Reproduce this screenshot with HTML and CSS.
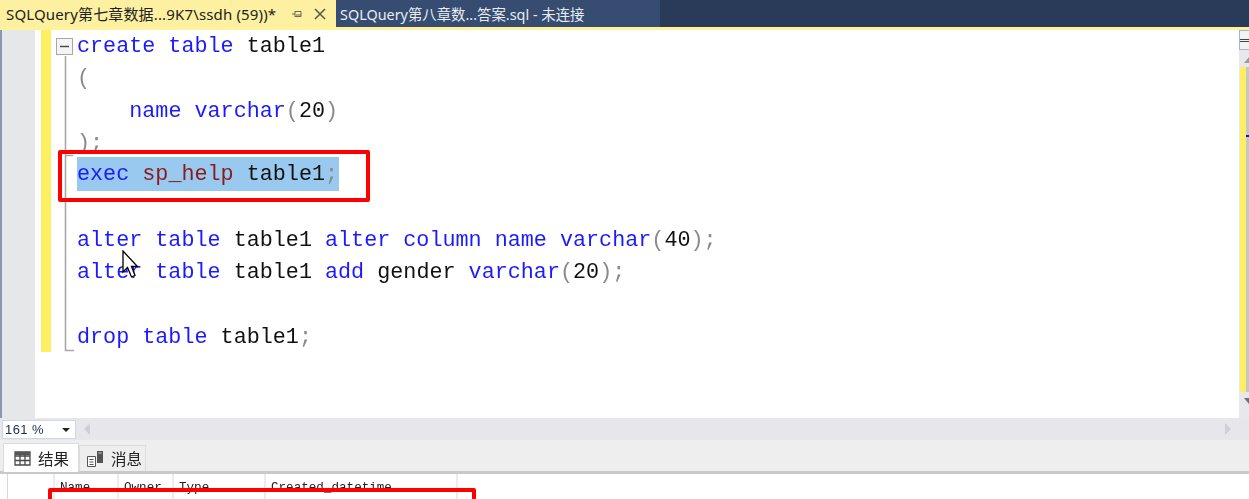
FILE: index.html
```html
<!DOCTYPE html>
<html lang="zh">
<head>
<meta charset="utf-8">
<title>SQLQuery</title>
<link rel="stylesheet" href="styles.css">
</head>
<body>
<div class="app">
  <div class="tabbar">
    <div class="tab tab-active">
      <span class="tab-title">SQLQuery第七章数据...9K7\ssdh (59))*</span>
      <svg class="tab-icon tab-pin" width="12" height="12" viewBox="0 0 12 12"><path d="M1 6h3M4 3v6M4 3.500h6v5H4M5 7h5" fill="none" stroke="#6b6a55" stroke-width="1"/></svg>
      <svg class="tab-icon" width="12" height="12" viewBox="0 0 12 12"><path d="M1 1l10 10M11 1L1 11" fill="none" stroke="#5b5a4a" stroke-width="1.600"/></svg>
    </div>
    <div class="tab tab-other">SQLQuery第八章数...答案.sql - 未连接</div>
  </div>
  <div class="accent"></div>
  <div class="editor">
    <div class="gutter"></div>
    <div class="margin"></div>
    <div class="changes"></div>
    <svg class="fold" width="26" height="322" viewBox="0 0 26 322">
      <path d="M14.500 26V320.500H23M14.500 125.500H22" fill="none" stroke="#a8a8a8" stroke-width="1.600"/>
      <rect x="5.500" y="8.500" width="16" height="16" fill="#f4f4f4" stroke="#a8a8a8"/>
      <path d="M9 16.500h9" stroke="#444" stroke-width="1.400"/>
    </svg>
    <div class="code">
      <div class="line"><b class="kw">create table</b> table1</div>
      <div class="line"><b class="op">(</b></div>
      <div class="line">    <b class="kw">name varchar</b><b class="op">(</b>20<b class="op">)</b></div>
      <div class="line"><b class="op">);</b></div>
      <div class="line"><span class="sel"><b class="kw">exec</b> <b class="sp">sp_help</b> table1<b class="op">;</b></span></div>
      <div class="line"> </div>
      <div class="line"><b class="kw">alter table</b> table1 <b class="kw">alter column name varchar</b><b class="op">(</b>40<b class="op">);</b></div>
      <div class="line"><b class="kw">alter table</b> table1 <b class="kw">add</b> gender <b class="kw">varchar</b><b class="op">(</b>20<b class="op">);</b></div>
      <div class="line"> </div>
      <div class="line"><b class="kw">drop table</b> table1<b class="op">;</b></div>
    </div>
    <div class="vscroll">
      <div class="split"><span class="split-bar"></span></div>
      <div class="arrow-up"></div>
      <div class="track"><div class="track-mark"></div><div class="track-gray"><i class="blue"></i></div></div>
      <div class="arrow-down"></div>
    </div>
  </div>
  <div class="hscroll">
    <div class="zoom-box"><span>161 %</span><i class="caret"></i></div>
    <i class="arrow-left"></i>
    <i class="arrow-right"></i>
  </div>
  <div class="result-tabs">
    <div class="rtab rtab-active">
      <svg width="17" height="15" viewBox="0 0 17 15"><path d="M1 1h15v13H1zM1 5h15M1 9.500h15M6 1v13M11 1v13" fill="none" stroke="#4a4a4a" stroke-width="1.300"/><path d="M1 1h15v3H1z" fill="#555"/></svg>
      <span>结果</span>
    </div>
    <div class="rtab rtab-plain">
      <svg width="18" height="18" viewBox="0 0 18 18"><path d="M1.500 6.500h8v10h-8zM3.500 9.500h4M3.500 12h4M3.500 14.500h4" fill="#fff" stroke="#555"/><path d="M11 1h6v12h-6z" fill="#555"/><path d="M12.500 3h3" stroke="#ddd"/></svg>
      <span>消息</span>
    </div>
  </div>
  <div class="grid">
    <div class="cell cell-blank"></div>
    <div class="cell cell-name">Name</div>
    <div class="cell cell-owner">Owner</div>
    <div class="cell cell-type">Type</div>
    <div class="cell cell-date">Created_datetime</div>
  </div>
  <div class="redbox redbox-code"></div>
  <div class="redbox redbox-grid"></div>
  <svg class="cursor" width="17" height="29" viewBox="0 0 17 29"><path d="M1 1V22L5.500 17.500L9.500 27L13 25.500L9.500 16.500H15.500Z" fill="#fff" stroke="#000" stroke-width="1.300"/></svg>
</div>
</body>
</html>
```
FILE: styles.css
```css
* { box-sizing: border-box; }
html, body { margin: 0; padding: 0; background: #fff; overflow: hidden; }
.app {
  position: relative;
  width: 1249px;
  height: 499px;
  overflow: hidden;
  display: flex;
  flex-direction: column;
  font-family: "Noto Sans", "Noto Sans CJK SC", sans-serif;
  filter: blur(0.35px);
}
.tabbar { height: 27px; display: flex; background: #2a3a59; flex: none; }
.tab { height: 27px; display: flex; align-items: center; white-space: nowrap; flex: none; }
.tab-active { width: 336px; background: #fdf0a0; color: #222; padding-left: 6px; font-size: 15px; letter-spacing: 0.15px; }
.tab-title { width: 285px; flex: none; }
.tab-icon { flex: none; }
.tab-pin { margin-right: 11px; }
.tab-other { width: 324px; background: #364c70; color: #e8edf4; padding-left: 4px; font-size: 14.400px; }
.accent { height: 3px; background: #fff29d; flex: none; }
.editor { height: 388px; display: flex; align-items: flex-start; flex: none; }
.gutter { width: 35px; height: 388px; flex: none; background: #e6e7e8; border-left: 2px solid #8b96b4; }
.margin { width: 6px; flex: none; }
.changes { width: 10px; height: 322px; background: #ffee62; flex: none; }
.fold { flex: none; display: block; }
.code {
  flex: 1;
  font-family: "Liberation Mono", monospace;
  font-size: 21.750px;
  line-height: 32.330px;
  color: #111;
  height: 388px;
  padding-top: 1px;
}
.line { height: 32.330px; white-space: pre; }
.code b { font-weight: normal; }
.kw { color: #1a1aff; }
.op { color: #8a8a8a; }
.sp { color: #8b1a1a; }
.sel { display: inline-block; vertical-align: top; height: 34px; margin-top: -3px; padding: 2px 1px 0 0; background: #99c9ef; }
.vscroll { width: 10px; height: 388px; background: #e8e8ec; flex: none; display: flex; flex-direction: column; align-items: flex-start; }
.split { width: 10px; height: 20px; border: 1px solid #a9b3c6; border-right: 0; background: #f2f2f4; display: flex; align-items: center; flex: none; }
.split-bar { display: block; width: 100%; height: 3px; border-top: 1px solid #444; border-bottom: 1px solid #444; }
.arrow-up { width: 0; height: 0; margin: 7px 0 4px 5px; border-left: 5px solid transparent; border-bottom: 6px solid #9a9aa2; flex: none; }
.track { display: flex; height: 325px; width: 10px; flex: none; }
.track-mark { width: 6px; height: 100%; margin-left: 1px; background: #ffee62; flex: none; }
.track-gray { flex: 1; background: #c6c6c6; padding-top: 68px; }
.blue { display: block; height: 2px; background: #1010d0; }
.arrow-down { width: 0; height: 0; margin: 6px 0 0 5px; border-left: 5px solid transparent; border-top: 6px solid #6e6e80; flex: none; }
.hscroll { height: 22px; background: #e6e6eb; display: flex; align-items: center; flex: none; padding-left: 2px; }
.zoom-box { width: 74px; height: 19px; background: #fff; border: 1px solid #cfd6e4; display: flex; align-items: center; justify-content: space-between; padding: 0 5px 0 2px; font-family: "Liberation Sans", sans-serif; font-size: 13px; color: #1f2b4d; letter-spacing: .4px; }
.caret { width: 0; height: 0; border-left: 4px solid transparent; border-right: 4px solid transparent; border-top: 4px solid #222; margin-top: 1px; }
.arrow-left { width: 0; height: 0; margin-left: 8px; border-top: 6px solid transparent; border-bottom: 6px solid transparent; border-right: 6px solid #cfcfd8; }
.arrow-right { width: 0; height: 0; margin-left: auto; margin-right: 18px; border-top: 6px solid transparent; border-bottom: 6px solid transparent; border-left: 6px solid #cfcfd8; }
.result-tabs { height: 34px; background: #eeeeee; border-bottom: 3px solid #c9c9cc; display: flex; align-items: flex-end; padding-left: 3px; flex: none; }
.rtab { display: flex; align-items: center; font-size: 15.500px; color: #222; flex: none; }
.rtab-active { width: 76px; height: 29px; background: #fff; border: 1px solid #dcdcdc; border-bottom: 0; gap: 7px; padding-left: 10px; margin-bottom: -1px; position: relative; }
.rtab-plain { width: 67px; height: 26px; border: 1px solid #dcdcdc; border-bottom: 0; gap: 7px; padding-left: 6px; }
.grid { height: 25px; display: flex; margin-left: 7px; border-left: 1px solid #d8d8d8; flex: none; }
.cell { height: 25px; border-right: 2px solid #ececec; font-family: "Liberation Mono", monospace; font-size: 12.600px; color: #222; padding: 7px 0 0 5px; white-space: nowrap; flex: none; line-height: 14px; }
.cell-blank { width: 47px; }
.cell-name { width: 64px; }
.cell-owner { width: 55px; }
.cell-type { width: 92px; }
.cell-date { width: 192px; }
.redbox { position: absolute; border: 4px solid #fe0000; border-radius: 2px; }
.redbox-code { left: 58px; top: 150px; width: 312px; height: 52px; }
.redbox-grid { left: 48px; top: 488px; width: 428px; height: 40px; }
.cursor { position: absolute; left: 122px; top: 250px; }
```
